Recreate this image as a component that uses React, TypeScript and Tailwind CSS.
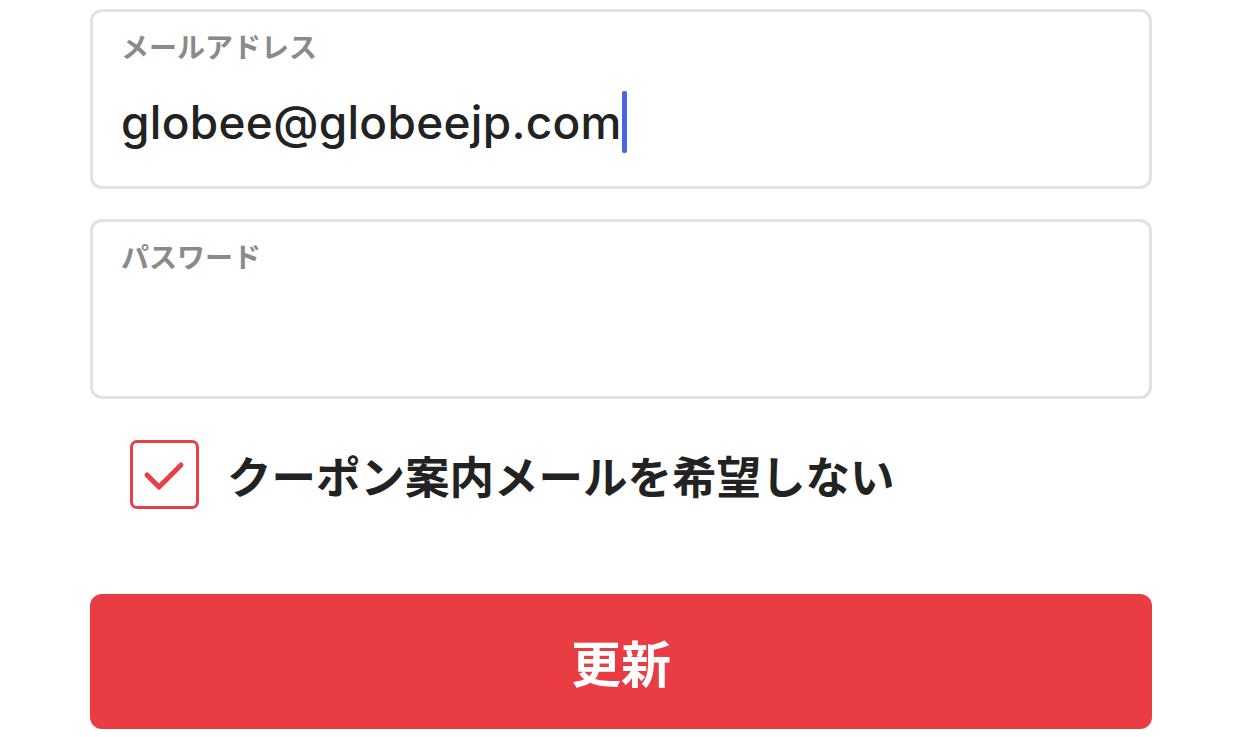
import React from "react";

export default function App() {
  const jp = { fontFamily: '"Noto Sans CJK JP", "Noto Sans", sans-serif' };
  return (
    <div className="w-[1242px] h-[737px] bg-white overflow-hidden" style={jp}>
      <div className="px-[90px] pt-[9px] flex flex-col">
        <div className="h-[180px] border-[3px] border-[#e2e2e2] rounded-[12px] pl-[28px] pt-[14px] flex flex-col">
          <div className="text-[28px] leading-[40px] font-bold text-[#8a8a8a]">メールアドレス</div>
          <div className="mt-[24px] flex items-center h-[64px]">
            <span className="text-[46px] leading-[64px] font-medium text-[#222222] tracking-[0.3px]" style={{ fontFamily: 'Inter, "Liberation Sans", Arial, sans-serif' }}>globee@globeejp.com</span>
            <span className="w-[5px] h-[62px] bg-[#4b63e6] rounded-[2px]" />
          </div>
        </div>
        <div className="mt-[30px] h-[180px] border-[3px] border-[#e2e2e2] rounded-[12px] pl-[28px] pt-[14px]">
          <div className="text-[28px] leading-[40px] font-bold text-[#8a8a8a]">パスワード</div>
        </div>
        <div className="mt-[41px] pl-[40px] flex items-center gap-[28px]">
          <div className="w-[69px] h-[69px] border-[3px] border-[#e84047] rounded-[7px] shrink-0">
            <svg width="63" height="63" viewBox="0 0 63 63" className="block">
              <path d="M14 32 L26 44 L48 22" fill="none" stroke="#e84047" strokeWidth="5" strokeLinecap="round" strokeLinejoin="round" />
            </svg>
          </div>
          <div className="text-[44.5px] font-bold text-[#222222] leading-[60px] whitespace-nowrap">クーポン案内メールを希望しない</div>
        </div>
        <button className="mt-[85px] h-[135px] w-full rounded-[12px] bg-[#e93c43] text-white text-[50px] font-bold flex items-center justify-center" style={jp}>
          更新
        </button>
      </div>
    </div>
  );
}
